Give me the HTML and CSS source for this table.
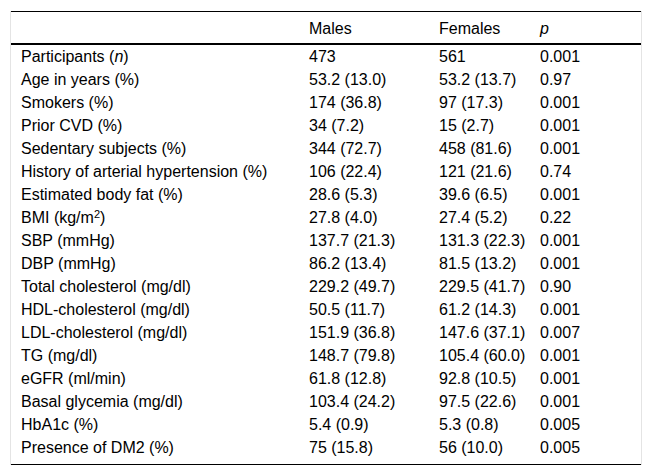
FILE: index.html
```html
<!DOCTYPE html>
<html>
<head>
<meta charset="utf-8">
<link rel="stylesheet" href="styles.css">
</head>
<body>
<div class="frame">
<table class="data">
<colgroup>
<col class="c1"><col class="c2"><col class="c3"><col class="c4">
</colgroup>
<thead>
<tr><th></th><th>Males</th><th>Females</th><th><i>p</i></th></tr>
</thead>
<tbody>
<tr><td>Participants (<i>n</i>)</td><td>473</td><td>561</td><td>0.001</td></tr>
<tr><td>Age in years (%)</td><td>53.2 (13.0)</td><td>53.2 (13.7)</td><td>0.97</td></tr>
<tr><td>Smokers (%)</td><td>174 (36.8)</td><td>97 (17.3)</td><td>0.001</td></tr>
<tr><td>Prior CVD (%)</td><td>34 (7.2)</td><td>15 (2.7)</td><td>0.001</td></tr>
<tr><td>Sedentary subjects (%)</td><td>344 (72.7)</td><td>458 (81.6)</td><td>0.001</td></tr>
<tr><td>History of arterial hypertension (%)</td><td>106 (22.4)</td><td>121 (21.6)</td><td>0.74</td></tr>
<tr><td>Estimated body fat (%)</td><td>28.6 (5.3)</td><td>39.6 (6.5)</td><td>0.001</td></tr>
<tr><td>BMI (kg/m<sup>2</sup>)</td><td>27.8 (4.0)</td><td>27.4 (5.2)</td><td>0.22</td></tr>
<tr><td>SBP (mmHg)</td><td>137.7 (21.3)</td><td>131.3 (22.3)</td><td>0.001</td></tr>
<tr><td>DBP (mmHg)</td><td>86.2 (13.4)</td><td>81.5 (13.2)</td><td>0.001</td></tr>
<tr><td>Total cholesterol (mg/dl)</td><td>229.2 (49.7)</td><td>229.5 (41.7)</td><td>0.90</td></tr>
<tr><td>HDL-cholesterol (mg/dl)</td><td>50.5 (11.7)</td><td>61.2 (14.3)</td><td>0.001</td></tr>
<tr><td>LDL-cholesterol (mg/dl)</td><td>151.9 (36.8)</td><td>147.6 (37.1)</td><td>0.007</td></tr>
<tr><td>TG (mg/dl)</td><td>148.7 (79.8)</td><td>105.4 (60.0)</td><td>0.001</td></tr>
<tr><td>eGFR (ml/min)</td><td>61.8 (12.8)</td><td>92.8 (10.5)</td><td>0.001</td></tr>
<tr><td>Basal glycemia (mg/dl)</td><td>103.4 (24.2)</td><td>97.5 (22.6)</td><td>0.001</td></tr>
<tr><td>HbA1c (%)</td><td>5.4 (0.9)</td><td>5.3 (0.8)</td><td>0.005</td></tr>
<tr class="last"><td>Presence of DM2 (%)</td><td>75 (15.8)</td><td>56 (10.0)</td><td>0.005</td></tr>
</tbody>
</table>
</div>
</body>
</html>
```
FILE: styles.css
```css
html, body {
  margin: 0;
  padding: 0;
  background: #fff;
}
body {
  padding: 11px 10px 0 10px;
  font-family: "Liberation Sans", Arial, sans-serif;
  font-size: 16px;
  color: #000;
}
.frame {
  width: 630px;
  border-left: 1px solid #e4e4e4;
  border-right: 1px solid #e4e4e4;
}
.data {
  width: 630px;
  border-collapse: collapse;
  table-layout: fixed;
  border-top: 1px solid #000;
  border-bottom: 1px solid #000;
}
.c1 { width: 288px; }
.c2 { width: 130px; }
.c3 { width: 101px; }
.c4 { width: 111px; }
.data th {
  font-weight: normal;
  text-align: left;
  padding: 6px 10px 3px 10px;
  line-height: 22px;
  height: 22px;
  border-bottom: 2px solid #000;
}
.data td {
  padding: 0 10px;
  line-height: 23px;
  height: 23px;
  text-align: left;
  vertical-align: top;
  white-space: nowrap;
}
.data .last td {
  padding-bottom: 5px;
}
.data sup {
  font-size: 11px;
  line-height: 0;
  vertical-align: 5px;
}
```
